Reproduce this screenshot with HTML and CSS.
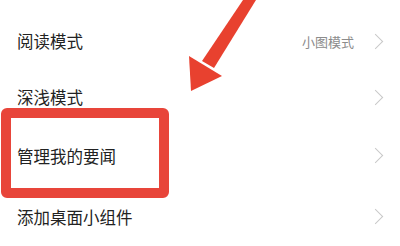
FILE: index.html
```html
<!DOCTYPE html>
<html>
<head>
  <title>设置</title>
  <link rel="stylesheet" href="styles.css">
</head>
<body>

  <div class="list">
    <div class="row row-short">
      <span class="label">阅读模式</span>
      <span class="value">小图模式</span>
      <span class="chevron"></span>
    </div>
    <div class="row row-short">
      <span class="label">深浅模式</span>
      <span class="chevron"></span>
    </div>
    <div class="row">
      <span class="label">管理我的要闻</span>
      <span class="chevron"></span>
    </div>
    <div class="row">
      <span class="label">添加桌面小组件</span>
      <span class="chevron"></span>
    </div>
  </div>

  <!-- annotation overlay -->
  <div class="highlight"></div>
  <svg class="arrow" width="400" height="246" viewBox="0 0 400 246">
    <polygon points="243,0 256,0 214,68 202,61" fill="#e8412f"/>
    <polygon points="189,56 222,76 191,91" fill="#e8412f"/>
  </svg>

</body>
</html>
```

FILE: styles.css
```css
body {
  font-family: "Noto Sans CJK SC", "Noto Sans", sans-serif;
  background-color: #fff;
  margin: 0;
  padding: 0;
  width: 400px;
  height: 246px;
  overflow: hidden;
  position: relative;
}

.list {
  padding-top: 13px;
}

.row {
  display: flex;
  align-items: center;
  height: 61px;
  padding: 0 17px;
}

.row-short {
  height: 56px;
}

.label {
  flex: 1;
  font-size: 16.5px;
  color: #222;
}

.value {
  font-size: 13px;
  color: #8c8c8c;
  margin-right: 16px;
}

.chevron {
  width: 10px;
  height: 10px;
  border-top: 1.3px solid #c8c8c8;
  border-right: 1.3px solid #c8c8c8;
  transform: rotate(45deg);
  margin-right: 2px;
}

.highlight {
  position: absolute;
  left: 1px;
  top: 108px;
  width: 148px;
  height: 70px;
  border: 10px solid #e8453a;
  border-radius: 6px;
}

.arrow {
  position: absolute;
  left: 0;
  top: 0;
}
```
